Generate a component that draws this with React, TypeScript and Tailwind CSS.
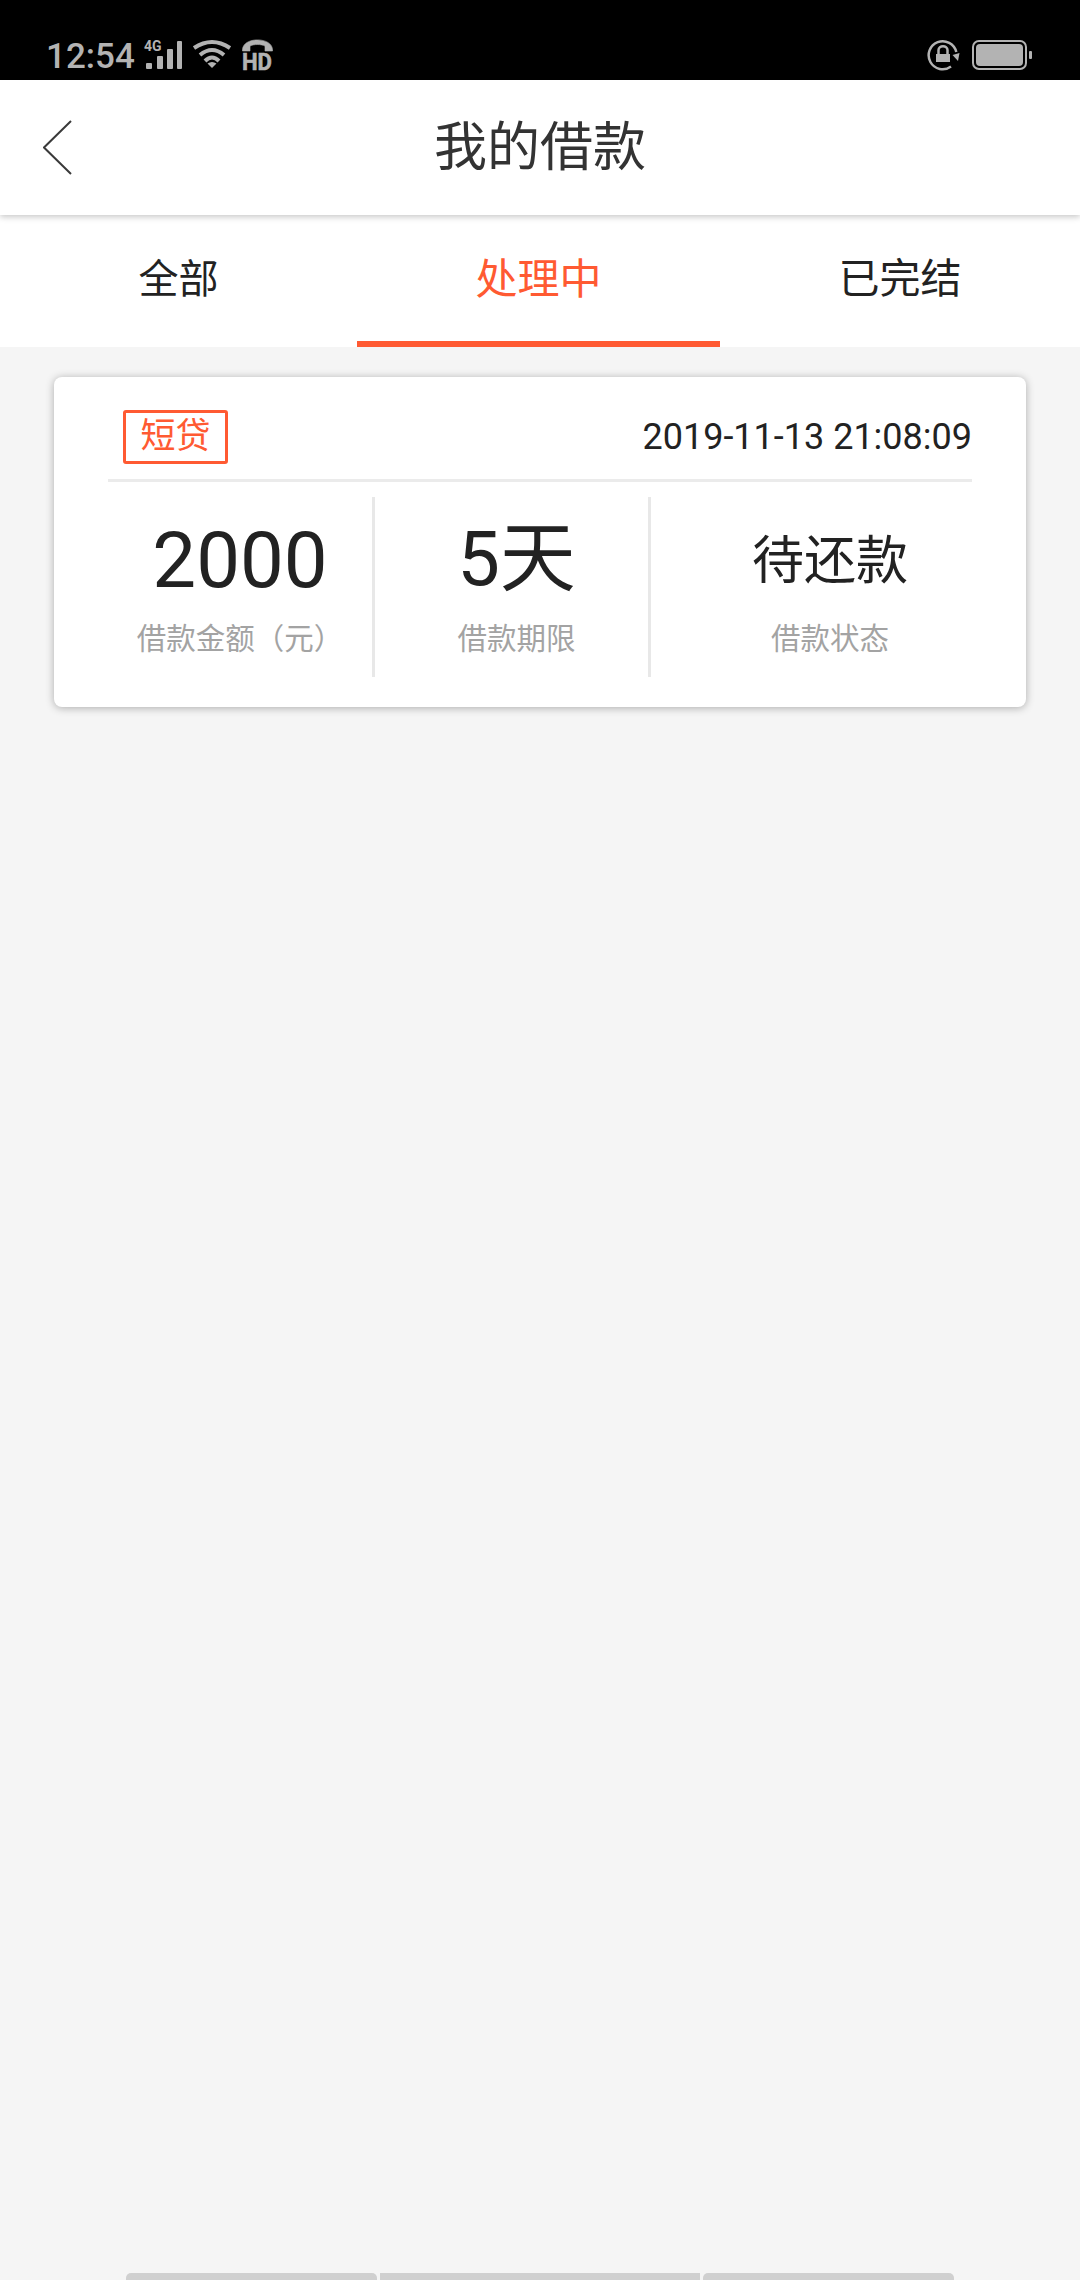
const font = { fontFamily: '"Roboto", "Noto Sans CJK SC", sans-serif' };

function StatusLeft() {
  return (
    <div className="flex items-start">
      <span className="w-[98px] shrink-0 text-[35px] leading-[36px] font-medium text-[#b3b3b3]">12:54</span>
      <svg width="38" height="30" viewBox="0 0 38 30" className="mt-[1px] overflow-visible" fill="#b3b3b3">
        <text x="0" y="11" fontSize="14" fontWeight="700" fontFamily="Roboto">4G</text>
        <rect x="2" y="23" width="6" height="6" rx="1" />
        <rect x="13" y="16" width="6" height="13" rx="1" />
        <rect x="23" y="9" width="6" height="20" rx="1" />
        <rect x="33" y="1" width="5" height="28" rx="1" />
      </svg>
      <svg width="40" height="30" viewBox="0 0 40 30" className="ml-[10px]" fill="none" stroke="#b3b3b3" strokeWidth="4">
        <path d="M2 9 Q20 -3 38 9" />
        <path d="M8 16 Q20 6 32 16" />
        <path d="M13 22 Q20 15 27 22" />
        <path d="M15.5 24.5 Q20 21.5 24.5 24.5 L20 29 Z" fill="#b3b3b3" stroke="none" />
      </svg>
      <svg width="31" height="32" viewBox="0 0 31 32" className="ml-[10px] overflow-visible" fill="#b3b3b3" stroke="#b3b3b3" strokeWidth="0.6">
        <path d="M0.5 11 C0.5 -2.5 30.5 -2.5 30.5 11 L30.5 12 L23 12 L23 7 C19 5 12 5 8 7 L8 12 L0.5 12 Z" />
        <text x="0" y="31" fontSize="24" fontWeight="700" fontFamily="Roboto" textLength="30" lengthAdjust="spacingAndGlyphs">HD</text>
      </svg>
    </div>
  );
}

function StatusRight() {
  return (
    <div className="flex items-center gap-[12px]">
      <svg width="33" height="32" viewBox="0 0 33 32" fill="none">
        <path d="M24 27.5 A14 14 0 1 1 29.3 13" stroke="#b3b3b3" strokeWidth="2.5" />
        <path d="M25.5 16 L32.5 14 L31 22 Z" fill="#b3b3b3" />
        <rect x="9" y="15" width="14" height="8" fill="#b3b3b3" />
        <path d="M11.5 15 V11 C11.5 6 20.5 6 20.5 11 V15" stroke="#b3b3b3" strokeWidth="2.5" />
      </svg>
      <div className="flex items-center gap-[2px]">
        <div className="w-[55px] h-[30px] rounded-[7px] border-2 border-[#b3b3b3] p-[2px]">
          <div className="w-full h-full rounded-[4px] bg-[#b3b3b3]" />
        </div>
        <div className="w-[3px] h-[8px] rounded-[1px] bg-[#b3b3b3]" />
      </div>
    </div>
  );
}

function Stat({ value, label, valueClass, className }: { value: string; label: string; valueClass: string; className: string }) {
  return (
    <div className={`flex flex-col items-center pt-[26px] ${className}`}>
      <div className={`h-[72px] flex items-center text-[#222222] ${valueClass}`}>{value}</div>
      <div className="mt-[24px] text-[29.5px] leading-[40px] text-[#a3a3a3]">{label}</div>
    </div>
  );
}

export default function App() {
  return (
    <div className="w-[1080px] h-[2280px] flex flex-col bg-[#f5f5f5] overflow-hidden" style={font}>
      <div className="h-[80px] shrink-0 bg-black flex items-start justify-between pl-[46px] pr-[48px] pt-[39px]">
        <StatusLeft />
        <StatusRight />
      </div>

      <div className="relative z-10 h-[135px] shrink-0 bg-white grid grid-cols-[1fr_auto_1fr] items-center shadow-[0_2px_6px_rgba(0,0,0,0.22)]">
        <svg width="30" height="56" viewBox="0 0 30 56" className="ml-[43px]" fill="none" stroke="#3a3a3a" strokeWidth="2">
          <path d="M28 1 L1 27.5 L28 54" />
        </svg>
        <div className="text-[53px] leading-[60px] text-[#333333]">我的借款</div>
        <div />
      </div>

      <div className="h-[132px] shrink-0 bg-white grid grid-cols-[357px_363px_360px] text-[40px]">
        <div className="flex items-center justify-center pb-[3px] text-[#222222]">全部</div>
        <div className="flex items-center justify-center pt-[3px] text-[#ff5a32] text-[42px] border-b-[6px] border-[#ff5a32]">处理中</div>
        <div className="flex items-center justify-center pb-[3px] text-[41px] text-[#222222]">已完结</div>
      </div>

      <div className="mt-[30px] mx-[54px] h-[330px] bg-white rounded-[8px] shadow-[0_1px_8px_rgba(0,0,0,0.3)] px-[54px]">
        <div className="h-[105px] flex items-center justify-between border-b-[3px] border-[#ebebeb] pt-[18px]">
          <div className="ml-[15px] w-[105px] h-[54px] border-[3px] border-[#ff5a32] rounded-[3px] flex items-center justify-center text-[35px] leading-[40px] text-[#ff5a32]">短贷</div>
          <div className="text-[36px] leading-[40px] text-[#222222]">2019-11-13 21:08:09</div>
        </div>
        <div className="mt-[15px] h-[180px] flex">
          <Stat value="2000" label="借款金额（元）" valueClass="text-[78px] pt-[2px]" className="w-[264px]" />
          <div className="w-[3px] bg-[#e8e8e8]" />
          <Stat value="5天" label="借款期限" valueClass="text-[76px]" className="w-[273px] pl-[10px]" />
          <div className="w-[3px] bg-[#e8e8e8]" />
          <Stat value="待还款" label="借款状态" valueClass="text-[52px] pt-[6px]" className="w-[321px] pl-[37px]" />
        </div>
      </div>

      <div className="mt-auto mx-[126px] flex gap-[3px]">
        <div className="w-[251px] h-[7px] bg-[#d0d0d0] rounded-t-[5px]" />
        <div className="w-[320px] h-[7px] bg-[#d0d0d0]" />
        <div className="w-[251px] h-[7px] bg-[#d0d0d0] rounded-t-[5px]" />
      </div>
    </div>
  );
}
